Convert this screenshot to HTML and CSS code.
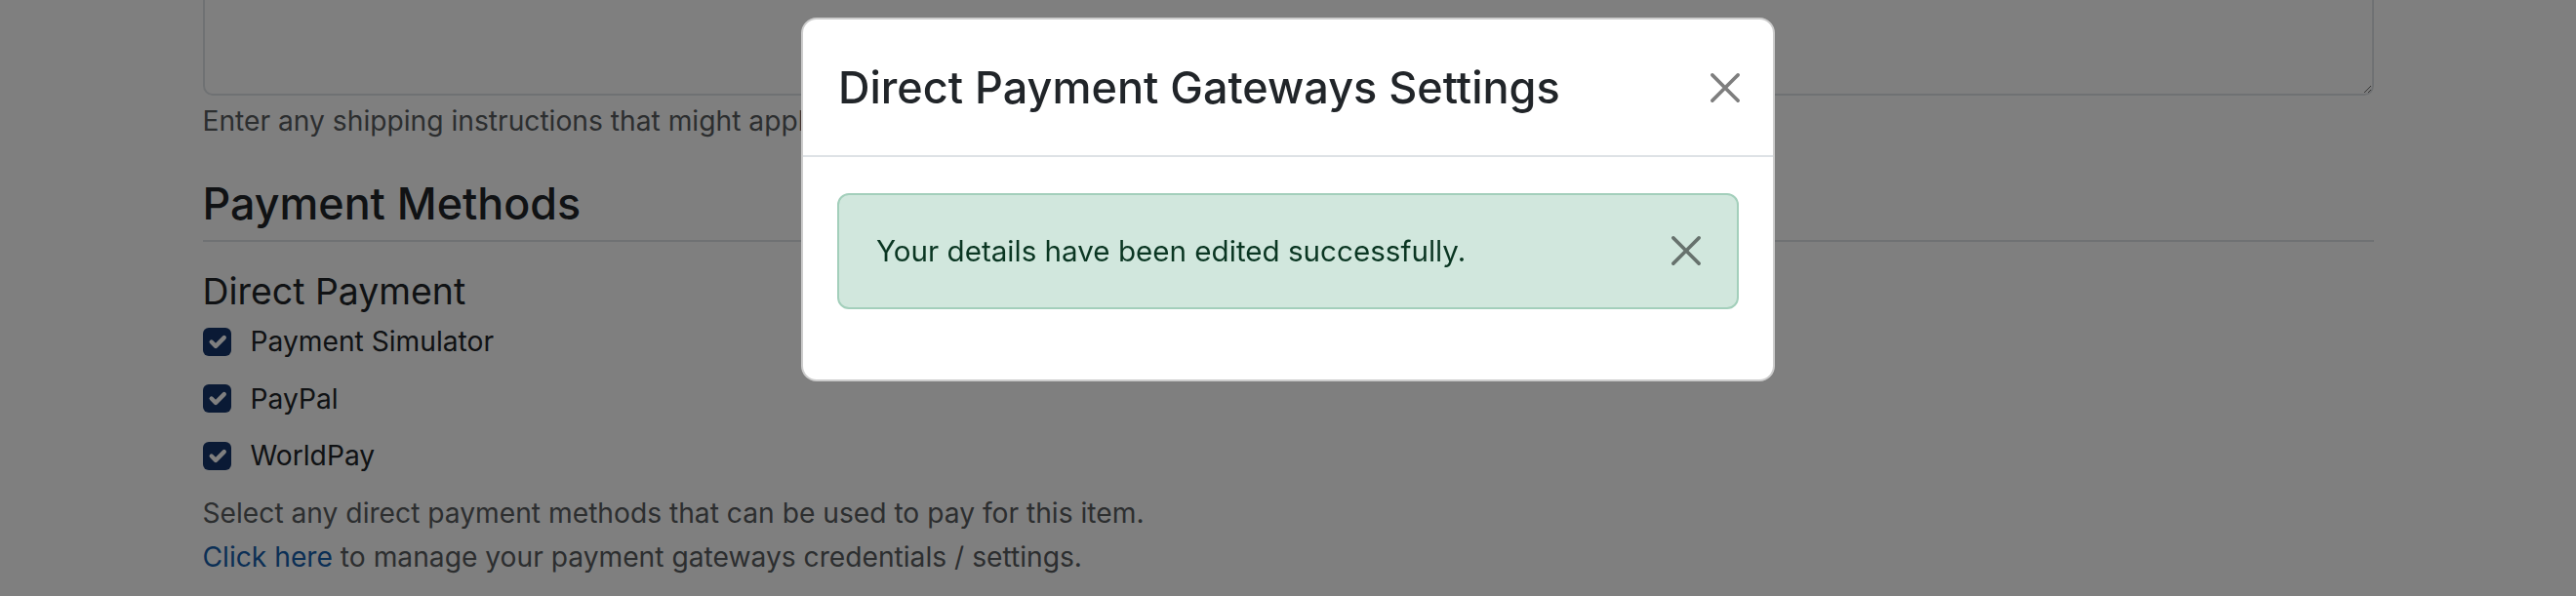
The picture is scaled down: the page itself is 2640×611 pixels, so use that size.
FILE: index.html
```html
<!DOCTYPE html>
<html lang="en">
<head>
<meta charset="utf-8">
<title>Direct Payment Gateways Settings</title>
<link rel="stylesheet" href="styles.css">
</head>
<body>
<main class="page">
  <div class="field">
    <textarea class="textarea" aria-label="Shipping instructions"></textarea>
    <p class="help">Enter any shipping instructions that might apply to this item.</p>
  </div>

  <h2 class="section-title">Payment Methods</h2>

  <h3 class="sub-title">Direct Payment</h3>
  <ul class="checks">
    <li class="check"><span class="box"><svg viewBox="0 0 20 20"><path d="m6 10 3 3 6-6"/></svg></span><span>Payment Simulator</span></li>
    <li class="check"><span class="box"><svg viewBox="0 0 20 20"><path d="m6 10 3 3 6-6"/></svg></span><span>PayPal</span></li>
    <li class="check"><span class="box"><svg viewBox="0 0 20 20"><path d="m6 10 3 3 6-6"/></svg></span><span>WorldPay</span></li>
  </ul>
  <p class="help help-block">Select any direct payment methods that can be used to pay for this item.<br><a class="link" href="#">Click here</a> to manage your payment gateways credentials / settings.</p>
</main>

<div class="backdrop"></div>

<div class="modal" role="dialog" aria-labelledby="modal-title">
  <div class="modal-content">
    <div class="modal-header">
      <h5 class="modal-title" id="modal-title">Direct Payment Gateways Settings</h5>
      <button class="btn-close" type="button" aria-label="Close"><svg viewBox="0 0 16 16"><path d="M1 1 15 15M15 1 1 15"/></svg></button>
    </div>
    <div class="modal-body">
      <div class="alert">
        <span>Your details have been edited successfully.</span>
        <button class="btn-close btn-close-alert" type="button" aria-label="Close"><svg viewBox="0 0 16 16"><path d="M1 1 15 15M15 1 1 15"/></svg></button>
      </div>
    </div>
  </div>
</div>
</body>
</html>
```

FILE: styles.css
```css
* { box-sizing: border-box; }

html, body {
  margin: 0;
  padding: 0;
  background: #fff;
  overflow: hidden;
}

body {
  font-family: Inter, "Noto Sans", sans-serif;
  font-size: 28.2px;
  line-height: 42px;
  color: #212529;
}

.page {
  width: 2225px;
  margin: -40px auto 0;
}

.textarea {
  display: block;
  width: 100%;
  height: 138px;
  border: 2px solid #dee2e6;
  border-radius: 10px;
  resize: vertical;
  background: #fff;
  font: inherit;
}

.help {
  margin: 5px 0 0;
  color: #595c5f;
}

.section-title {
  margin: 38px 0 0;
  font-size: 44.8px;
  line-height: 53px;
  font-weight: 500;
  padding-bottom: 10px;
  border-bottom: 2px solid #dee2e6;
}

.sub-title {
  margin: 29px 0 0;
  font-size: 37.4px;
  line-height: 43px;
  font-weight: 400;
}

.checks {
  list-style: none;
  margin: 9px 0 0;
  padding: 0;
  display: flex;
  flex-direction: column;
  gap: 16.5px;
}

.check {
  display: flex;
  align-items: center;
  gap: 20px;
  height: 42px;
}

.box {
  width: 29px;
  height: 29px;
  border-radius: 6px;
  background: #14346a;
  display: flex;
  align-items: center;
  justify-content: center;
}

.box svg {
  width: 29px;
  height: 29px;
  fill: none;
  stroke: #fff;
  stroke-width: 3;
  stroke-linecap: round;
  stroke-linejoin: round;
}

.help-block {
  margin-top: 16px;
  line-height: 45px;
}

.link {
  color: #165eab;
  text-decoration: none;
}

.backdrop {
  position: fixed;
  inset: 0;
  background: rgba(0, 0, 0, 0.5);
}

.modal {
  position: fixed;
  inset: 0;
  display: flex;
  justify-content: center;
  align-items: flex-start;
  padding-top: 18px;
}

.modal-content {
  width: 998px;
  background: #fff;
  border: 2px solid rgba(0, 0, 0, 0.2);
  border-radius: 16px;
  display: flex;
  flex-direction: column;
}

.modal-header {
  display: flex;
  align-items: center;
  justify-content: space-between;
  padding: 36px 34px 36px 36px;
  border-bottom: 2px solid #dee2e6;
}

.modal-title {
  margin: 0;
  font-size: 45px;
  line-height: 67px;
  font-weight: 500;
  color: #212529;
}

.btn-close {
  width: 30px;
  height: 30px;
  padding: 0;
  border: 0;
  background: transparent;
  opacity: 0.5;
  display: flex;
}

.btn-close svg {
  width: 30px;
  height: 30px;
  fill: none;
  stroke: #000;
  stroke-width: 1.9;
  stroke-linecap: round;
}

.modal-body {
  padding: 37px 35px 36px 35px;
}

.alert {
  display: flex;
  align-items: center;
  justify-content: space-between;
  padding: 36px 37px 37px 38px;
  background: #d1e7dd;
  border: 2px solid #a3cfbb;
  border-radius: 12px;
  color: #0a3622;
  font-size: 29.6px;
  margin-bottom: 36px;
}
```
